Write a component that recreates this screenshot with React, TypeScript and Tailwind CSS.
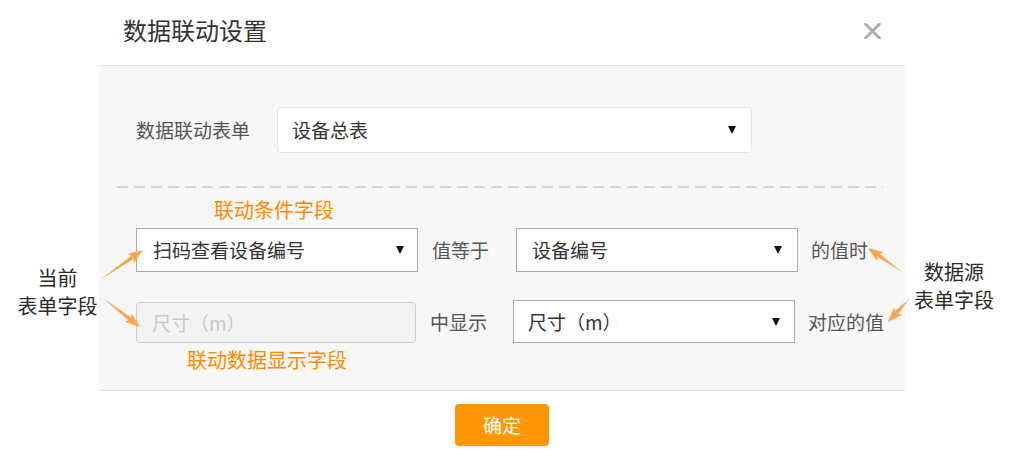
import React from "react";

type P = [number, number];

function arrowPoints(tail: P, tip: P, headLen = 13, headW = 11, shaftW = 4): string {
  const dx = tip[0] - tail[0];
  const dy = tip[1] - tail[1];
  const len = Math.hypot(dx, dy);
  const ux = dx / len;
  const uy = dy / len;
  const nx = -uy;
  const ny = ux;
  const bx = tip[0] - ux * headLen;
  const by = tip[1] - uy * headLen;
  const pts: P[] = [
    tail,
    [bx + (nx * shaftW) / 2, by + (ny * shaftW) / 2],
    [bx + (nx * headW) / 2 - ux * 2, by + (ny * headW) / 2 - uy * 2],
    tip,
    [bx - (nx * headW) / 2 - ux * 2, by - (ny * headW) / 2 - uy * 2],
    [bx - (nx * shaftW) / 2, by - (ny * shaftW) / 2],
  ];
  return pts.map((p) => `${p[0].toFixed(1)},${p[1].toFixed(1)}`).join(" ");
}

const Caret = () => (
  <svg width="8" height="8" viewBox="0 0 8 8" className="shrink-0">
    <polygon points="0,0 8,0 4,8" fill="#111" />
  </svg>
);

export default function App() {
  const font = { fontFamily: '"Noto Sans CJK SC", "Noto Sans", sans-serif' };
  const arrows: [P, P][] = [
    [[100, 280], [143, 250]],
    [[103, 298], [140, 327]],
    [[902, 272], [868, 248]],
    [[910, 298], [888, 322]],
  ];
  return (
    <div className="relative w-[1016px] h-[456px] bg-white flex text-[#333]" style={font}>
      {/* left annotation */}
      <div className="w-[99px] shrink-0 pt-[264px] pl-[16px] text-center text-[20px] leading-[28px] text-[#2a2a2a]">
        <div>当前</div>
        <div>表单字段</div>
      </div>

      {/* dialog column */}
      <div className="w-[806px] shrink-0 flex flex-col">
        <div className="h-[66px] border-b border-[#e3e3e3] flex items-start justify-between pl-[24px] pr-[24px] pt-[15px]">
          <div className="text-[24px] leading-[30px] text-[#333]">数据联动设置</div>
          <svg width="17" height="16" viewBox="0 0 17 16" className="mt-[8px]">
            <path d="M1.5 1 L15.5 15 M15.5 1 L1.5 15" stroke="#ababab" strokeWidth="2.6" strokeLinecap="round" />
          </svg>
        </div>

        <div className="h-[325px] bg-[#f7f7f7] border-b border-[#e0e0e0] pt-[41px]">
          {/* row 1 */}
          <div className="flex items-center pl-[37px]">
            <div className="w-[141px] text-[19px] leading-[26px] text-[#555]">数据联动表单</div>
            <div className="w-[475px] h-[46px] bg-white border border-[#e4e4e4] rounded-[4px] flex items-center justify-between pl-[14px] pr-[15px]">
              <span className="text-[19px] leading-[26px] text-[#333]">设备总表</span>
              <Caret />
            </div>
          </div>

          {/* dashed line */}
          <div className="mt-[33px] ml-[18px] w-[766px] h-[2px] bg-[repeating-linear-gradient(to_right,#d6d6d6_0px,#d6d6d6_11px,transparent_11px,transparent_17px)]" />

          {/* orange label 1 */}
          <div className="mt-[10px] pl-[115px] text-[20px] leading-[24px] text-[#ff8a00]">联动条件字段</div>

          {/* row 2 */}
          <div className="mt-[6px] flex items-center pl-[37px] h-[44px]">
            <div className="w-[282px] h-[44px] bg-white border border-[#a9a9a9] flex items-center justify-between pl-[16px] pr-[13px]">
              <span className="text-[19px] leading-[26px] text-[#333]">扫码查看设备编号</span>
              <Caret />
            </div>
            <div className="ml-[14px] w-[84px] text-[19px] leading-[26px] text-[#555]">值等于</div>
            <div className="w-[282px] h-[44px] bg-white border border-[#a9a9a9] flex items-center justify-between pl-[15px] pr-[15px]">
              <span className="text-[19px] leading-[26px] text-[#333]">设备编号</span>
              <Caret />
            </div>
            <div className="ml-[13px] text-[19px] leading-[26px] text-[#555]">的值时</div>
          </div>

          {/* row 3 */}
          <div className="mt-[28px] flex items-center pl-[37px] h-[43px]">
            <div className="self-end w-[280px] h-[41px] bg-[#f3f3f3] border border-[#cdcdcd] rounded-[4px] flex items-center pl-[15px]">
              <span className="text-[19px] leading-[26px] text-[#c8c8c8]">尺寸（m）</span>
            </div>
            <div className="ml-[14px] w-[83px] text-[19px] leading-[26px] text-[#555]">中显示</div>
            <div className="w-[282px] h-[43px] bg-white border border-[#a9a9a9] flex items-center justify-between pl-[14px] pr-[14px]">
              <span className="text-[19px] leading-[26px] text-[#333]">尺寸（m）</span>
              <Caret />
            </div>
            <div className="ml-[13px] text-[19px] leading-[26px] text-[#555]">对应的值</div>
          </div>

          {/* orange label 2 */}
          <div className="mt-[5px] pl-[88px] text-[20px] leading-[24px] text-[#ff8a00]">联动数据显示字段</div>
        </div>

        <div className="flex justify-center pt-[13px]">
          <button className="w-[94px] h-[42px] rounded-[4px] bg-[#ff9800] text-white text-[19px] leading-[26px] flex items-center justify-center">
            确定
          </button>
        </div>
      </div>

      {/* right annotation */}
      <div className="w-[111px] shrink-0 pt-[258px] pr-[13px] text-center text-[20px] leading-[28px] text-[#2a2a2a]">
        <div>数据源</div>
        <div>表单字段</div>
      </div>

      <svg className="absolute inset-0 pointer-events-none" width="1016" height="456" viewBox="0 0 1016 456">
        {arrows.map(([t, h], i) => (
          <polygon key={i} points={arrowPoints(t, h)} fill="#f9a54b" />
        ))}
      </svg>
    </div>
  );
}
